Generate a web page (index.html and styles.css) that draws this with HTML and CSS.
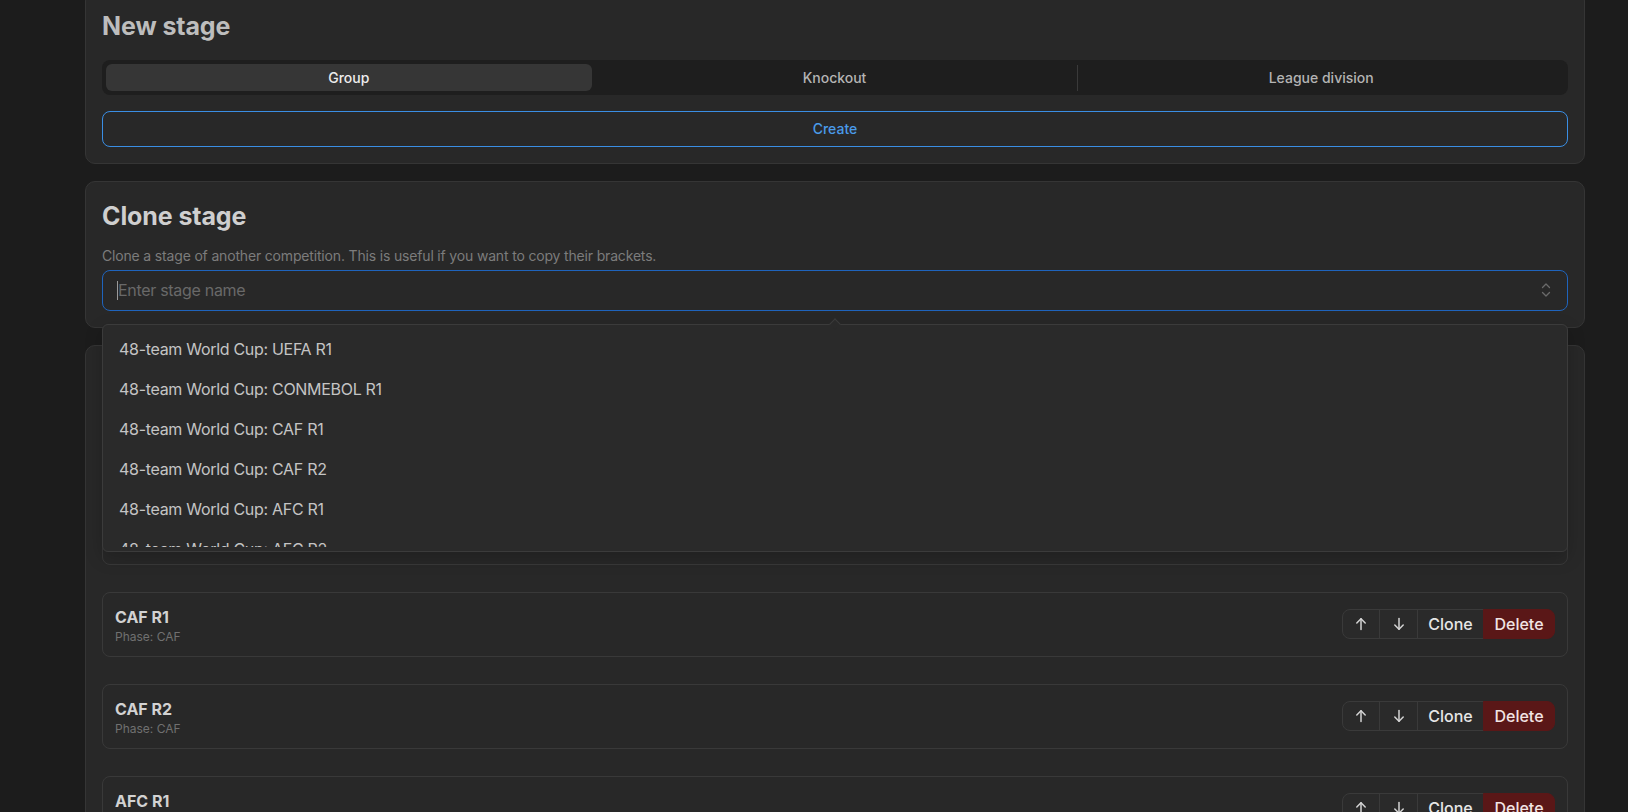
FILE: index.html
```html
<!DOCTYPE html>
<html lang="en">
<head>
<meta charset="utf-8">
<title>Stages</title>
<link rel="stylesheet" href="styles.css">
</head>
<body>
<main class="page">
  <section class="card card-new">
    <h2 class="card-title title-dim">New stage</h2>
    <div class="segmented">
      <button class="segment is-active">Group</button>
      <button class="segment">Knockout</button>
      <span class="seg-divider"></span>
      <button class="segment">League division</button>
    </div>
    <button class="btn-outline">Create</button>
  </section>

  <section class="card card-clone">
    <h2 class="card-title">Clone stage</h2>
    <p class="card-desc">Clone a stage of another competition. This is useful if you want to copy their brackets.</p>
    <div class="combo">
      <div class="combo-input">
        <span class="caret"></span><span class="placeholder">Enter stage name</span>
        <svg class="combo-icon" width="10" height="16" viewBox="0 0 10 16" fill="none" stroke="currentColor" stroke-width="1.3" stroke-linecap="round" stroke-linejoin="round"><path d="M1.5 5.5L5 2l3.5 3.5"/><path d="M1.5 10.5L5 14l3.5-3.5"/></svg>
      </div>
      <div class="dropdown">
        <span class="dropdown-arrow"></span>
        <ul class="dropdown-list">
          <li class="option">48-team World Cup: UEFA R1</li>
          <li class="option">48-team World Cup: CONMEBOL R1</li>
          <li class="option">48-team World Cup: CAF R1</li>
          <li class="option">48-team World Cup: CAF R2</li>
          <li class="option">48-team World Cup: AFC R1</li>
          <li class="option">48-team World Cup: AFC R2</li>
          <li class="option">48-team World Cup: OFC R1</li>
        </ul>
      </div>
    </div>
  </section>

  <section class="card card-stages">
    <h2 class="card-title">Stages</h2>
    <div class="stage-list">
      <div class="stage">
        <div class="stage-info"><div class="stage-name">UEFA R1</div><div class="stage-phase">Phase: UEFA</div></div>
        <div class="btn-group">
          <button class="gbtn gbtn-icon"><svg width="12" height="14" viewBox="0 0 12 14" fill="none" stroke="currentColor" stroke-width="1.5" stroke-linecap="round" stroke-linejoin="round"><path d="M6 12.5V1.8"/><path d="M1.8 6L6 1.8 10.2 6"/></svg></button>
          <button class="gbtn gbtn-icon"><svg width="12" height="14" viewBox="0 0 12 14" fill="none" stroke="currentColor" stroke-width="1.5" stroke-linecap="round" stroke-linejoin="round"><path d="M6 1.5V12.2"/><path d="M1.8 8L6 12.2 10.2 8"/></svg></button>
          <button class="gbtn gbtn-text">Clone</button>
          <button class="gbtn gbtn-danger">Delete</button>
        </div>
      </div>
      <div class="stage">
        <div class="stage-info"><div class="stage-name">CONMEBOL R1</div><div class="stage-phase">Phase: CONMEBOL</div></div>
        <div class="btn-group">
          <button class="gbtn gbtn-icon"><svg width="12" height="14" viewBox="0 0 12 14" fill="none" stroke="currentColor" stroke-width="1.5" stroke-linecap="round" stroke-linejoin="round"><path d="M6 12.5V1.8"/><path d="M1.8 6L6 1.8 10.2 6"/></svg></button>
          <button class="gbtn gbtn-icon"><svg width="12" height="14" viewBox="0 0 12 14" fill="none" stroke="currentColor" stroke-width="1.5" stroke-linecap="round" stroke-linejoin="round"><path d="M6 1.5V12.2"/><path d="M1.8 8L6 12.2 10.2 8"/></svg></button>
          <button class="gbtn gbtn-text">Clone</button>
          <button class="gbtn gbtn-danger">Delete</button>
        </div>
      </div>
      <div class="stage">
        <div class="stage-info"><div class="stage-name">CAF R1</div><div class="stage-phase">Phase: CAF</div></div>
        <div class="btn-group">
          <button class="gbtn gbtn-icon"><svg width="12" height="14" viewBox="0 0 12 14" fill="none" stroke="currentColor" stroke-width="1.5" stroke-linecap="round" stroke-linejoin="round"><path d="M6 12.5V1.8"/><path d="M1.8 6L6 1.8 10.2 6"/></svg></button>
          <button class="gbtn gbtn-icon"><svg width="12" height="14" viewBox="0 0 12 14" fill="none" stroke="currentColor" stroke-width="1.5" stroke-linecap="round" stroke-linejoin="round"><path d="M6 1.5V12.2"/><path d="M1.8 8L6 12.2 10.2 8"/></svg></button>
          <button class="gbtn gbtn-text">Clone</button>
          <button class="gbtn gbtn-danger">Delete</button>
        </div>
      </div>
      <div class="stage">
        <div class="stage-info"><div class="stage-name">CAF R2</div><div class="stage-phase">Phase: CAF</div></div>
        <div class="btn-group">
          <button class="gbtn gbtn-icon"><svg width="12" height="14" viewBox="0 0 12 14" fill="none" stroke="currentColor" stroke-width="1.5" stroke-linecap="round" stroke-linejoin="round"><path d="M6 12.5V1.8"/><path d="M1.8 6L6 1.8 10.2 6"/></svg></button>
          <button class="gbtn gbtn-icon"><svg width="12" height="14" viewBox="0 0 12 14" fill="none" stroke="currentColor" stroke-width="1.5" stroke-linecap="round" stroke-linejoin="round"><path d="M6 1.5V12.2"/><path d="M1.8 8L6 12.2 10.2 8"/></svg></button>
          <button class="gbtn gbtn-text">Clone</button>
          <button class="gbtn gbtn-danger">Delete</button>
        </div>
      </div>
      <div class="stage">
        <div class="stage-info"><div class="stage-name">AFC R1</div><div class="stage-phase">Phase: AFC</div></div>
        <div class="btn-group">
          <button class="gbtn gbtn-icon"><svg width="12" height="14" viewBox="0 0 12 14" fill="none" stroke="currentColor" stroke-width="1.5" stroke-linecap="round" stroke-linejoin="round"><path d="M6 12.5V1.8"/><path d="M1.8 6L6 1.8 10.2 6"/></svg></button>
          <button class="gbtn gbtn-icon"><svg width="12" height="14" viewBox="0 0 12 14" fill="none" stroke="currentColor" stroke-width="1.5" stroke-linecap="round" stroke-linejoin="round"><path d="M6 1.5V12.2"/><path d="M1.8 8L6 12.2 10.2 8"/></svg></button>
          <button class="gbtn gbtn-text">Clone</button>
          <button class="gbtn gbtn-danger">Delete</button>
        </div>
      </div>
    </div>
  </section>
</main>
</body>
</html>
```

FILE: styles.css
```css
* { box-sizing: border-box; }

html, body {
  margin: 0;
  height: 100%;
  overflow: hidden;
  background: #1c1c1c;
  font-family: Inter, "Noto Sans", "Liberation Sans", sans-serif;
  color: #d0d0d0;
}

.page {
  margin-top: -9px;
  padding: 0 43px 0 85px;
  display: flex;
  flex-direction: column;
  gap: 17px;
}

.card {
  background: #282828;
  border: 1px solid #353535;
  border-radius: 10px;
  padding: 16px;
}

.card-new {
  display: flex;
  flex-direction: column;
  gap: 16px;
}

.card-title {
  margin: 0;
  font-size: 25px;
  line-height: 36px;
  font-weight: 700;
  color: #cfcfcf;
  letter-spacing: -0.1px;
}

.title-dim { color: #bdbdbd; }

/* segmented control */
.segmented {
  display: flex;
  align-items: center;
  background: #1e1e1e;
  border-radius: 8px;
  padding: 4px;
  height: 35px;
}

.segment {
  flex: 1 1 0;
  height: 27px;
  border: 0;
  border-radius: 6px;
  background: transparent;
  font-family: inherit;
  font-size: 14px;
  font-weight: 500;
  color: #b4b4b4;
}

.segment.is-active {
  background: #363636;
  color: #ececec;
}

.seg-divider {
  width: 1px;
  height: 26px;
  background: #3a3a3a;
  flex: 0 0 1px;
}

.btn-outline {
  height: 35.5px;
  border: 1px solid #3a8ee4;
  border-radius: 8px;
  background: transparent;
  font-family: inherit;
  font-size: 14px;
  font-weight: 500;
  color: #4a9be9;
}

/* clone card */
.card-desc {
  margin: 11px 0 4px;
  font-size: 14px;
  line-height: 21px;
  letter-spacing: -0.17px;
  color: #7c7c7c;
}

.combo { position: relative; }

.combo-input {
  height: 41px;
  border: 1px solid #1f64bd;
  border-radius: 8px;
  display: flex;
  align-items: center;
  padding: 0 16px 0 14px;
  font-size: 16px;
}

.caret {
  width: 1px;
  height: 19px;
  background: #9a9a9a;
}

.placeholder {
  color: #696969;
  flex: 1;
  letter-spacing: -0.3px;
}

.combo-icon { color: #6a6a6a; }

.dropdown {
  position: absolute;
  z-index: 10;
  top: calc(100% + 13px);
  left: 0;
  right: 0;
  background: #2a2a2a;
  border: 1px solid #3b3b3b;
  border-radius: 6px;
  padding: 4px;
  box-shadow: 0 6px 18px rgba(0, 0, 0, 0.2);
}

.dropdown-arrow {
  position: absolute;
  top: -5px;
  left: calc(50% - 4px);
  width: 8px;
  height: 8px;
  background: #2a2a2a;
  border-left: 1px solid #3b3b3b;
  border-top: 1px solid #3b3b3b;
  transform: rotate(45deg);
}

.dropdown-list {
  list-style: none;
  margin: 0;
  padding: 0;
  height: 218px;
  overflow: hidden;
}

.option {
  height: 40px;
  display: flex;
  align-items: center;
  padding: 0 12px;
  font-size: 16px;
  letter-spacing: -0.3px;
  color: #c4c4c4;
}

/* stages */
.card-stages .card-title { margin-bottom: 10px; }

.stage-list {
  display: flex;
  flex-direction: column;
  gap: 27px;
}

.stage {
  border: 1px solid #393939;
  border-radius: 8px;
  padding: 12px;
  display: flex;
  align-items: center;
  justify-content: space-between;
}

.stage-name {
  font-size: 16px;
  line-height: 24px;
  font-weight: 700;
  color: #d2d2d2;
}

.stage-phase {
  font-size: 12px;
  line-height: 15px;
  color: #707070;
}

.btn-group {
  display: flex;
  height: 30px;
}

.gbtn {
  height: 30px;
  border: 1px solid #3a3a3a;
  background: #2a2a2a;
  font-family: inherit;
  font-size: 16px;
  font-weight: 500;
  color: #e6e6e6;
  display: flex;
  align-items: center;
  justify-content: center;
  padding: 0;
}

.gbtn + .gbtn { margin-left: -1px; }

.gbtn-icon { width: 39px; color: #d4d4d4; }
.gbtn-icon:first-child { width: 38px; border-radius: 8px 0 0 8px; }

.gbtn-text { width: 67px; }

.gbtn-danger {
  width: 72px;
  background: #5a1717;
  border-color: #5a1717;
  color: #f2e4e4;
  border-radius: 0 8px 8px 0;
}
```
